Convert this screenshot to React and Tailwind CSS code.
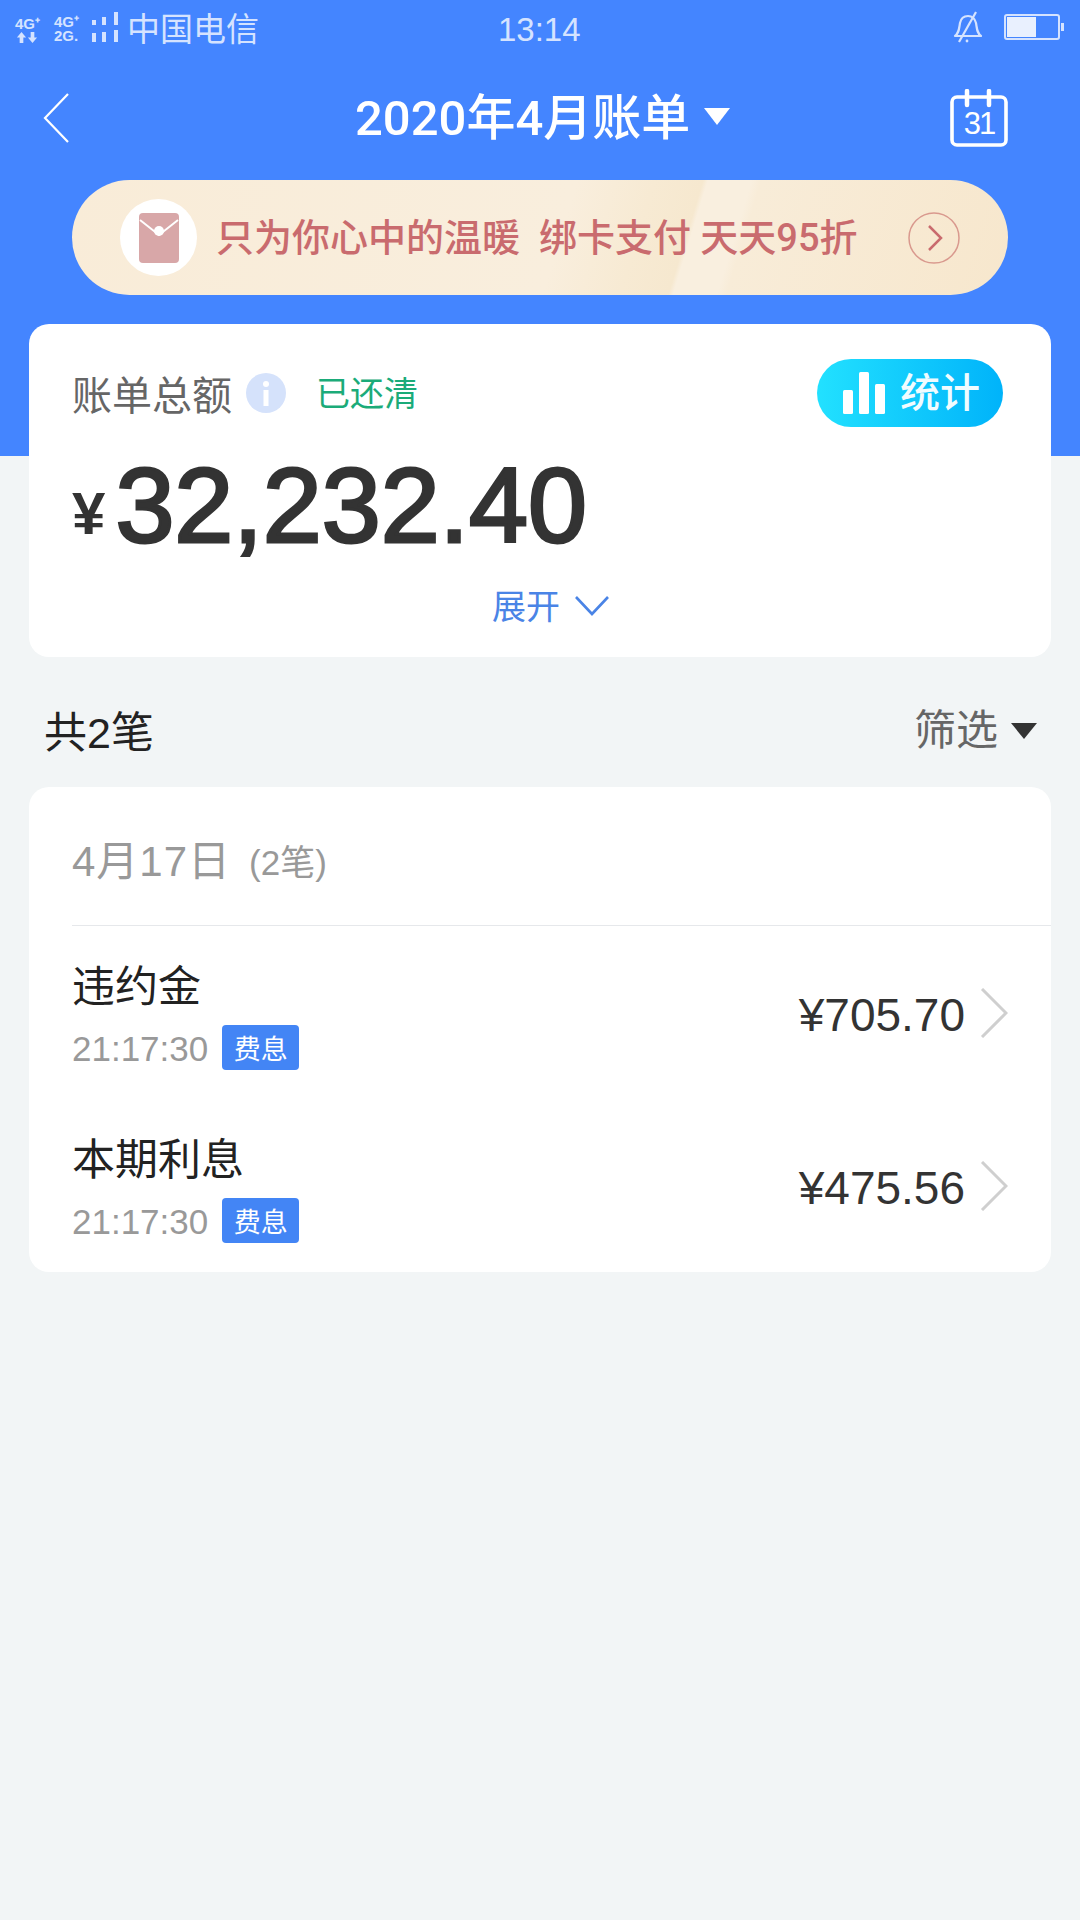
import React from "react";

const FONT = "font-['Liberation_Sans','Noto_Sans_CJK_SC',sans-serif]";

function StatusBar() {
  return (
    <div className="relative flex h-[58px] items-center text-[#d5e3ff]">
      <div className="ml-[15px] flex w-[38px] flex-col text-[15px] font-bold leading-[15px]">
        <span>4G⁺</span>
        <svg className="mt-[1px]" width="24" height="11" viewBox="0 0 24 12" fill="currentColor">
          <path d="M6 0l5 6H8v6H4V6H1zM18 12l-5-6h3V0h4v6h3z" />
        </svg>
      </div>
      <div className="ml-[1px] flex w-[36px] flex-col text-[15px] font-bold leading-[14px]">
        <span>4G⁺</span>
        <span>2G.</span>
      </div>
      <svg width="30" height="34" viewBox="0 0 30 34" fill="currentColor">
        <rect x="2" y="8" width="4" height="5" />
        <rect x="12" y="5" width="4" height="8" />
        <rect x="24" y="0" width="4" height="13" />
        <rect x="2" y="21" width="4" height="9" />
        <rect x="12" y="20" width="4" height="10" />
        <rect x="24" y="18" width="4" height="12" />
      </svg>
      <span className="ml-[7px] text-[33px] leading-none">中国电信</span>
      <span className="absolute left-[498px] text-[33px] leading-none">13:14</span>
      <svg className="absolute left-[952px] top-[10px]" width="32" height="34" viewBox="0 0 32 34" fill="none" stroke="currentColor" strokeWidth="2.2">
        <path d="M3 26c4-3 4-7 5-13 1-5 4-7 8-7s7 3 8 7c1 6 1 10 5 13z" strokeLinejoin="round" />
        <path d="M24 2L7 32" />
        <circle cx="15" cy="31" r="1.4" fill="currentColor" stroke="none" />
      </svg>
      <div className="absolute left-[1004px] top-[14px] flex items-center">
        <div className="h-[26px] w-[56px] rounded-[3px] border-2 border-[#d5e3ff] p-[1px]">
          <div className="h-full w-[29px] bg-[#e9f0fe]" />
        </div>
        <div className="ml-[1px] h-[8px] w-[3px] bg-[#d5e3ff]" />
      </div>
    </div>
  );
}

function NavBar() {
  return (
    <div className="flex h-[120px] items-center pl-[43px] pr-[72px] text-white">
      <svg width="26" height="50" viewBox="0 0 26 50" fill="none" stroke="currentColor" strokeWidth="2.2">
        <path d="M25 1L2 25l23 24" />
      </svg>
      <span className="ml-[286px] font-['Roboto','Noto_Sans_CJK_SC',sans-serif] text-[49px] font-medium leading-none">2020年4月账单</span>
      <span className="ml-[14px] mt-[-4px] h-0 w-0 border-x-[13px] border-t-[17px] border-x-transparent border-t-white" />
      <div className="ml-auto">
        <svg width="58" height="58" viewBox="0 0 58 58" fill="none">
          <rect x="2" y="8" width="54" height="48" rx="5" stroke="#fff" strokeWidth="3.6" />
          <path d="M17 2v14M39 2v14" stroke="#fff" strokeWidth="4.5" strokeLinecap="round" />
          <text x="29" y="45" textAnchor="middle" fill="#fff" fontSize="31" letterSpacing="-2" fontFamily="'Liberation Sans',sans-serif">31</text>
        </svg>
      </div>
    </div>
  );
}

function Banner() {
  return (
    <div className="mx-[72px] mt-[2px] flex h-[115px] items-center rounded-full bg-[linear-gradient(107deg,#f9ecd8_0%,#f9eedd_52%,#f7ead3_60%,#f6e8cf_65%,#f9efdf_65.5%,#f9efdf_70%,#f8ecd8_71%,#f7e7cd_100%)] pl-[48px] pr-[48px]">
      <div className="flex h-[77px] w-[77px] shrink-0 items-center justify-center rounded-full bg-white">
        <svg width="40" height="50" viewBox="0 0 40 50">
          <rect x="0" y="0" width="40" height="50" rx="4" fill="#d8a7a8" />
          <path d="M1 7l19 15L39 7" fill="none" stroke="#fff" strokeWidth="2" />
          <circle cx="20" cy="18" r="5" fill="#fff" />
        </svg>
      </div>
      <span className="ml-[19px] whitespace-pre font-['Roboto','Noto_Sans_CJK_SC',sans-serif] text-[38px] font-medium leading-none text-[#c96b6e]">只为你心中的温暖  绑卡支付 天天95折</span>
      <svg className="ml-auto" width="52" height="52" viewBox="0 0 52 52" fill="none" stroke="#d9998e">
        <circle cx="26" cy="26" r="25" strokeWidth="1.5" />
        <path d="M21 14l12 12-12 12" strokeWidth="2.5" stroke="#c96b6e" />
      </svg>
    </div>
  );
}

function SummaryCard() {
  return (
    <div className="mx-[29px] -mt-[132px] rounded-[20px] bg-white pl-[43px] pr-[48px] pt-[35px] pb-[26px]">
      <div className="flex h-[68px] items-center">
        <span className="pt-[6px] text-[40px] leading-none text-[#666]">账单总额</span>
        <span className="ml-[14px] flex h-[40px] w-[40px] items-center justify-center rounded-full bg-[#d5e2fb]">
          <svg width="8" height="26" viewBox="0 0 8 26" fill="#fff">
            <circle cx="4" cy="4" r="3" />
            <rect x="1.5" y="10" width="5" height="16" />
          </svg>
        </span>
        <span className="ml-[30px] pt-[2px] text-[34px] leading-none text-[#1bab79]">已还清</span>
        <div className="ml-auto flex h-[68px] w-[186px] items-center rounded-full bg-[linear-gradient(90deg,#22e1ff,#00b3fa)] pl-[26px]">
          <svg width="42" height="42" viewBox="0 0 42 42" fill="#fff">
            <rect x="0" y="18" width="10" height="24" rx="1.5" />
            <rect x="16" y="0" width="10" height="42" rx="1.5" />
            <rect x="32" y="12" width="10" height="30" rx="1.5" />
          </svg>
          <span className="ml-[15px] text-[40px] font-medium leading-none text-[#f0fcff]">统计</span>
        </div>
      </div>
      <div className="mt-[18px] flex h-[120px] items-center text-[#333]">
        <span className="mt-[18px] text-[60px] font-bold leading-none">¥</span>
        <span className="ml-[10px] text-[106px] leading-none [-webkit-text-stroke:3px_#333]">32,232.40</span>
      </div>
      <div className="mt-[16px] flex h-[50px] items-center justify-center text-[#4a84e6]">
        <span className="ml-[26px] pt-[2px] text-[34px] leading-none">展开</span>
        <svg className="ml-[15px]" width="34" height="20" viewBox="0 0 34 20" fill="none" stroke="currentColor" strokeWidth="2.6">
          <path d="M1 1l16 17L33 1" />
        </svg>
      </div>
    </div>
  );
}

function BillRow({ title, amount }) {
  return (
    <div className="flex h-[173px] items-center pl-[43px] pr-[43px]">
      <div className="flex flex-col pt-[6px]">
        <span className="h-[50px] text-[43px] leading-[50px] text-[#222]">{title}</span>
        <div className="mt-[13px] flex h-[45px] items-center">
          <span className="pt-[3px] text-[35px] leading-none text-[#999]">21:17:30</span>
          <span className="ml-[14px] flex h-[45px] w-[77px] items-center justify-center rounded-[4px] bg-[#4385f5] pt-[6px] text-[27px] leading-none text-white">费息</span>
        </div>
      </div>
      <span className="ml-auto pt-[4px] text-[46px] leading-none text-[#333]">{amount}</span>
      <svg className="ml-[15px]" width="28" height="50" viewBox="0 0 28 50" fill="none" stroke="#cfcfcf" strokeWidth="3">
        <path d="M2 1l24 24L2 49" />
      </svg>
    </div>
  );
}

export default function App() {
  return (
    <div className={`h-[1920px] w-[1080px] overflow-hidden bg-[#f2f5f6] ${FONT}`}>
      <div className="h-[456px] bg-[#4485ff]">
        <StatusBar />
        <NavBar />
        <Banner />
      </div>
      <SummaryCard />
      <div className="flex h-[130px] items-center pl-[44px] pr-[43px] pt-[18px]">
        <span className="pt-[4px] text-[43px] leading-none text-[#222]">共2笔</span>
        <span className="ml-auto text-[42px] leading-none text-[#666]">筛选</span>
        <span className="ml-[13px] h-0 w-0 border-x-[13px] border-t-[16px] border-x-transparent border-t-[#333]" />
      </div>
      <div className="mx-[29px] rounded-[20px] bg-white">
        <div className="ml-[43px] flex h-[139px] items-center border-b border-[#e6e8eb] pt-[12px] text-[#999]">
          <span className="text-[42px] leading-none tracking-[1px]">4月17日</span>
          <span className="ml-[18px] text-[35px] leading-none">(2笔)</span>
        </div>
        <BillRow title="违约金" amount="¥705.70" />
        <BillRow title="本期利息" amount="¥475.56" />
      </div>
    </div>
  );
}
